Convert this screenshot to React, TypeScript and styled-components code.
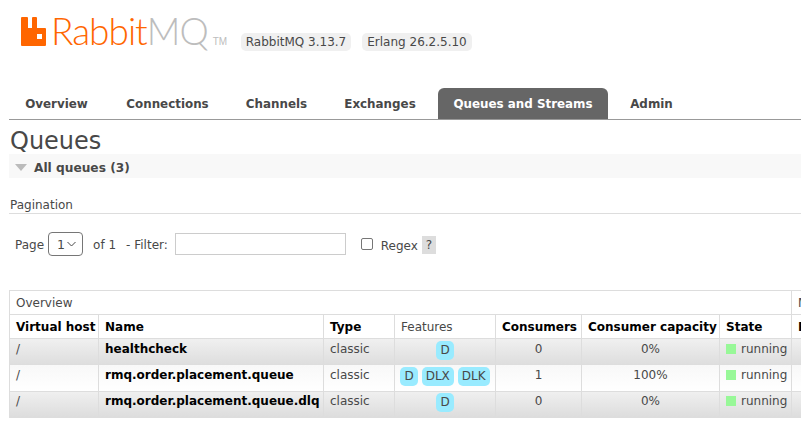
import styled, { createGlobalStyle } from "styled-components";

const GlobalStyle = createGlobalStyle`
  html, body {
    margin: 0;
    padding: 0;
    overflow: hidden;
    background: #fff;
  }
  body {
    width: 801px;
    height: 434px;
    font-family: "DejaVu Sans", Verdana, sans-serif;
    font-size: 12px;
    color: #484848;
  }
`;

const Page = styled.div`
  width: 801px;
  height: 434px;
  overflow: hidden;
`;
const Header = styled.header`
  display: flex;
  align-items: flex-start;
  height: 88px;
  padding: 17px 0 0 21px;
  box-sizing: border-box;
`;
const Logo = styled.div`
  display: flex;
  align-items: flex-start;
  width: 220px;
  flex: none;
`;
const LogoWord = styled.span<{ $grey?: boolean }>`
  margin-top: -1px;
  font-family: "Lato", sans-serif;
  font-weight: 300;
  font-size: 37px;
  line-height: 30px;
  letter-spacing: -1px;
  color: ${(props) => (props.$grey ? "#bdbdbd" : "#ff6600")};
`;
const LogoMark = styled.span`
  margin: 20px 0 0 5px;
  font-family: "Liberation Sans", sans-serif;
  font-size: 10px;
  line-height: 10px;
  color: #bdbdbd;
`;
const Versions = styled.div`
  display: flex;
  gap: 11px;
  margin-top: 16px;
`;
const Version = styled.span`
  width: 110px;
  height: 18px;
  border-radius: 5px;
  background: #f0f0f0;
  text-align: center;
  font-size: 12px;
  line-height: 18px;
  color: #484848;
`;
const Tabs = styled.nav`
  display: flex;
  height: 31px;
  margin-left: 9px;
  border-bottom: 1px solid #999;
`;
const Tab = styled.a<{ $active?: boolean; $width: number }>`
  display: flex;
  align-items: center;
  justify-content: center;
  width: ${(props) => props.$width}px;
  height: 31px;
  padding-top: 1px;
  box-sizing: border-box;
  border-radius: 6px 6px 0 0;
  background: ${(props) => (props.$active ? "#666" : "transparent")};
  color: ${(props) => (props.$active ? "#fff" : "#484848")};
  font-size: 11.9px;
  font-weight: bold;
`;
const Main = styled.main`
  padding-left: 9px;
`;
const Title = styled.h1`
  margin: 5px 0 0 1px;
  height: 29px;
  font-size: 24px;
  font-weight: normal;
  line-height: 32px;
  color: #484848;
`;
const SectionBar = styled.h2`
  display: flex;
  align-items: center;
  gap: 7px;
  height: 24px;
  margin: 0;
  padding: 3px 0 0 6px;
  box-sizing: border-box;
  background: #f8f8f8;
  font-size: 12.2px;
  font-weight: bold;
  color: #484848;
`;
const Triangle = styled.span`
  width: 0;
  height: 0;
  border-left: 6px solid transparent;
  border-right: 6px solid transparent;
  border-top: 7px solid #bbb;
`;
const SubHeading = styled.h3`
  height: 18px;
  margin: 17px 0 0;
  padding-left: 1px;
  border-bottom: 1px solid #ddd;
  font-size: 12px;
  font-weight: normal;
  line-height: 20px;
  color: #484848;
`;
const Filters = styled.div`
  display: flex;
  align-items: center;
  height: 24px;
  margin: 18px 0 0 6px;
  color: #484848;
`;
const FilterText = styled.span<{ $left?: number; $down?: number }>`
  margin-left: ${(props) => props.$left ?? 0}px;
  padding-top: ${(props) => props.$down ?? 1}px;
  white-space: nowrap;
`;
const PageSelect = styled.div`
  display: flex;
  align-items: center;
  justify-content: space-between;
  width: 35px;
  height: 24px;
  margin-left: 4px;
  padding: 0 6px 0 8px;
  box-sizing: border-box;
  border: 1px solid #767676;
  border-radius: 4px;
  font-size: 12.5px;
`;
const FilterInput = styled.input`
  width: 171px;
  height: 22px;
  margin: 0 0 0 7px;
  padding: 0;
  box-sizing: border-box;
  border: 1px solid #ccc;
  background: #fff;
`;
const RegexBox = styled.input`
  appearance: none;
  width: 12px;
  height: 12px;
  margin: 0 0 0 15px;
  box-sizing: border-box;
  border: 1px solid #767676;
  border-radius: 2px;
  background: #fff;
`;
const Help = styled.span`
  width: 14px;
  height: 18px;
  margin: 2px 0 0 4px;
  background: #ddd;
  text-align: center;
  font-size: 12px;
  line-height: 18px;
`;
const Table = styled.table`
  width: 820px;
  margin: 34px 0 0;
  table-layout: fixed;
  border-collapse: collapse;
  border: 1px solid #ddd;
`;
const GroupCell = styled.th`
  height: 23px;
  padding: 0 0 0 6px;
  border: 1px solid #ddd;
  font-size: 12px;
  font-weight: normal;
  text-align: left;
  color: #484848;
`;
const HeadCell = styled.th<{ $plain?: boolean }>`
  height: 23px;
  padding: 0 0 0 6px;
  border: 1px solid #ddd;
  font-size: 12px;
  font-weight: ${(props) => (props.$plain ? "normal" : "bold")};
  text-align: left;
  white-space: nowrap;
  overflow: hidden;
  color: ${(props) => (props.$plain ? "#484848" : "#000")};
`;
const Row = styled.tr<{ $even?: boolean }>`
  background: ${(props) =>
    props.$even
      ? "linear-gradient(#f8f8f8, #ffffff)"
      : "linear-gradient(#f0f0f0, #dddddd)"};
`;
const Cell = styled.td<{ $center?: boolean; $name?: boolean }>`
  height: 26.4px;
  padding: 0 0 6px ${(props) => (props.$center ? 0 : 6)}px;
  box-sizing: border-box;
  border: 1px solid #ddd;
  font-size: 12px;
  font-weight: ${(props) => (props.$name ? "bold" : "normal")};
  text-align: ${(props) => (props.$center ? "center" : "left")};
  white-space: nowrap;
  overflow: hidden;
  color: ${(props) => (props.$name ? "#000" : "#484848")};
`;
const Features = styled.td`
  height: 26.4px;
  padding: 0 0 3px;
  box-sizing: border-box;
  border: 1px solid #ddd;
  text-align: center;
  white-space: nowrap;
  font-size: 0;
`;
const Badge = styled.abbr`
  display: inline-block;
  height: 19px;
  margin: 0 2px;
  padding: 0 4px;
  border-radius: 5px;
  background: #99ebff;
  font-size: 12px;
  line-height: 19px;
  color: #484848;
  vertical-align: middle;
`;
const StateCell = styled.div`
  display: flex;
  align-items: center;
  gap: 5px;
`;
const Dot = styled.span`
  width: 10px;
  height: 10px;
  background: #98f898;
`;

const queues = [
  { name: "healthcheck", features: ["D"], consumers: "0", capacity: "0%" },
  {
    name: "rmq.order.placement.queue",
    features: ["D", "DLX", "DLK"],
    consumers: "1",
    capacity: "100%",
  },
  {
    name: "rmq.order.placement.queue.dlq",
    features: ["D"],
    consumers: "0",
    capacity: "0%",
  },
];

const tabs = [
  { label: "Overview", width: 95 },
  { label: "Connections", width: 127 },
  { label: "Channels", width: 91 },
  { label: "Exchanges", width: 116 },
  { label: "Queues and Streams", width: 170, active: true },
  { label: "Admin", width: 87 },
];

function App() {
  return (
    <Page>
      <GlobalStyle />
      <Header>
        <Logo>
          <svg width="26" height="29" viewBox="0 0 26 29" style={{ flex: "none", marginRight: 4 }}>
            <path
              fillRule="evenodd"
              fill="#ff6600"
              d="M0 1a1 1 0 0 1 1-1h5a1 1 0 0 1 1 1v10h4V1a1 1 0 0 1 1-1h3a1 1 0 0 1 1 1v10h8a1 1 0 0 1 1 1v16a1 1 0 0 1-1 1H1a1 1 0 0 1-1-1zM16 17v5h5v-5z"
            />
          </svg>
          <LogoWord>Rabbit</LogoWord>
          <LogoWord $grey>MQ</LogoWord>
          <LogoMark>TM</LogoMark>
        </Logo>
        <Versions>
          <Version>RabbitMQ 3.13.7</Version>
          <Version>Erlang 26.2.5.10</Version>
        </Versions>
      </Header>
      <Tabs>
        {tabs.map((tab) => (
          <Tab key={tab.label} $width={tab.width} $active={tab.active}>
            {tab.label}
          </Tab>
        ))}
      </Tabs>
      <Main>
        <Title>Queues</Title>
        <SectionBar>
          <Triangle />
          All queues (3)
        </SectionBar>
        <SubHeading>Pagination</SubHeading>
        <Filters>
          <FilterText>Page</FilterText>
          <PageSelect>
            1
            <svg width="9" height="6" viewBox="0 0 9 6">
              <path d="M0.5 1l4 4 4-4" fill="none" stroke="#484848" />
            </svg>
          </PageSelect>
          <FilterText $left={10}>of 1</FilterText>
          <FilterText $left={10}>- Filter:</FilterText>
          <FilterInput type="text" />
          <RegexBox type="checkbox" />
          <FilterText $left={8} $down={4}>
            Regex
          </FilterText>
          <Help>?</Help>
        </Filters>
        <Table>
          <colgroup>
            <col style={{ width: 89 }} />
            <col style={{ width: 225 }} />
            <col style={{ width: 71 }} />
            <col style={{ width: 101 }} />
            <col style={{ width: 86 }} />
            <col style={{ width: 138 }} />
            <col style={{ width: 72 }} />
            <col style={{ width: 38 }} />
          </colgroup>
          <thead>
            <tr>
              <GroupCell colSpan={7}>Overview</GroupCell>
              <GroupCell>Messages</GroupCell>
            </tr>
            <tr>
              <HeadCell>Virtual host</HeadCell>
              <HeadCell>Name</HeadCell>
              <HeadCell>Type</HeadCell>
              <HeadCell $plain>Features</HeadCell>
              <HeadCell>Consumers</HeadCell>
              <HeadCell>Consumer capacity</HeadCell>
              <HeadCell>State</HeadCell>
              <HeadCell>Ready</HeadCell>
            </tr>
          </thead>
          <tbody>
            {queues.map((queue, index) => (
              <Row key={queue.name} $even={index % 2 === 1}>
                <Cell>/</Cell>
                <Cell $name>{queue.name}</Cell>
                <Cell>classic</Cell>
                <Features>
                  {queue.features.map((feature) => (
                    <Badge key={feature}>{feature}</Badge>
                  ))}
                </Features>
                <Cell $center>{queue.consumers}</Cell>
                <Cell $center>{queue.capacity}</Cell>
                <Cell>
                  <StateCell>
                    <Dot />
                    running
                  </StateCell>
                </Cell>
                <Cell />
              </Row>
            ))}
          </tbody>
        </Table>
      </Main>
    </Page>
  );
}

export default App;
